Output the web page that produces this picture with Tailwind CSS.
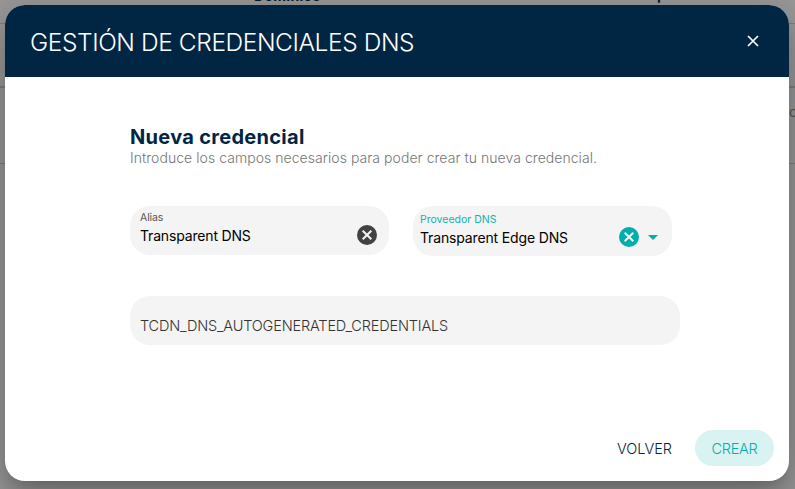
<!DOCTYPE html>
<html lang="es">
<head>
<meta charset="utf-8">
<title>Gestión de credenciales DNS</title>
<script src="https://cdn.jsdelivr.net/npm/@tailwindcss/browser@4"></script>
</head>
<body class="relative h-[489px] w-[795px] overflow-hidden bg-[#999] font-['Inter',sans-serif]">
  <div class="absolute inset-0" aria-hidden="true">
    <div class="absolute inset-x-0 top-[23px] h-px bg-[#808080]"></div>
    <div class="absolute inset-x-0 top-[86px] h-[2px] bg-[#808080]"></div>
    <div class="absolute inset-x-0 top-[163px] h-px bg-[#808080]"></div>
    <span class="absolute left-[254px] top-[-13px] text-[14px] font-bold leading-[18px] tracking-[0.3px] text-[#011a2c]">Dominios</span>
    <span class="absolute left-[657px] top-[-14px] text-[14px] font-bold leading-[18px] text-[#011a2c]">p</span>
    <span class="absolute left-[784px] top-[103px] text-[14px] leading-[18px] text-[#555]">ro</span>
  </div>
  <main class="relative ml-[5px] mt-[5px] flex h-[476px] w-[784px] flex-col overflow-hidden rounded-[20px] bg-white shadow-[0_11px_15px_-7px_rgba(0,0,0,0.2),0_24px_38px_3px_rgba(0,0,0,0.14),0_9px_46px_8px_rgba(0,0,0,0.12)]">
    <header class="flex h-[72px] items-center justify-between bg-[#002643] pl-[25px] pr-[30px] text-white">
      <h1 class="whitespace-nowrap pt-px text-[24.5px] font-light leading-8 tracking-[-0.42px]">GESTIÓN DE CREDENCIALES DNS</h1>
      <svg class="h-3 w-3" viewBox="0 0 12 12" fill="none" stroke="currentColor" stroke-width="1.7"><path d="M1 1 11 11M11 1 1 11"/></svg>
    </header>
    <section class="flex flex-1 flex-col pl-[125px] pr-[109px] pt-[47px]">
      <h2 class="h-[26px] text-[20px] font-bold leading-[27px] tracking-[0.3px] text-[#002643]">Nueva credencial</h2>
      <p class="h-[16px] whitespace-nowrap text-[14px] font-light leading-[16px] tracking-[0.05px] text-[#757575]">Introduce los campos necesarios para poder crear tu nueva credencial.</p>
      <div class="mt-[40px] flex h-[50px] items-start gap-6">
        <div class="flex h-[49px] w-[259px] items-center justify-between rounded-[20px] bg-[#f4f4f4] pl-[10px] pr-[12px]">
          <div class="flex h-full flex-col pt-[5px]"><span class="h-[14px] text-[10.5px] leading-[14px] tracking-[-0.1px] text-[#555]">Alias</span><span class="text-[14px] leading-[22px] tracking-[-0.17px] text-black">Transparent DNS</span></div>
          <svg class="mt-[9px] h-5 w-5" viewBox="2 2 20 20"><circle cx="12" cy="12" r="10" fill="#424242"/><path d="m7.7 7.7 8.6 8.6m0-8.6-8.6 8.6" stroke="#f4f4f4" stroke-width="2"/></svg>
        </div>
        <div class="flex h-[50px] w-[259px] items-center rounded-[20px] bg-[#f4f4f4] pl-[7px] pr-[14px]">
          <div class="flex h-full flex-1 flex-col pt-[7px]"><span class="h-[13px] text-[10.5px] leading-[14px] text-[#0ab5b1]">Proveedor DNS</span><span class="text-[14px] leading-[23px] tracking-[-0.15px] text-black">Transparent Edge DNS</span></div>
          <svg class="mr-[9px] mt-[12px] h-5 w-5" viewBox="2 2 20 20"><circle cx="12" cy="12" r="10" fill="#00aeac"/><path d="m7.7 7.7 8.6 8.6m0-8.6-8.6 8.6" stroke="#f4f4f4" stroke-width="2"/></svg>
          <svg class="mt-[13px] h-[5px] w-[10px]" viewBox="0 0 10 5"><path d="M0 0h10L5 5z" fill="#00aeac"/></svg>
        </div>
      </div>
      <div class="mt-[40px] flex h-[49px] w-[550px] items-center rounded-[20px] bg-[#f4f4f4] pl-[10px] pt-[10px] text-[14.5px] font-light leading-[20px] tracking-[-0.17px] text-[#333]">TCDN_DNS_AUTOGENERATED_CREDENTIALS</div>
    </section>
    <footer class="flex h-[51px] items-start justify-end gap-[7px] pr-[15px] text-[14.5px] font-light leading-[37px]">
      <button class="h-9 px-4 text-[#002643]">VOLVER</button>
      <button class="h-9 w-[79px] rounded-full bg-[#d9f3f2] tracking-[-0.3px] text-[#00aeac]">CREAR</button>
    </footer>
  </main>
</body>
</html>
